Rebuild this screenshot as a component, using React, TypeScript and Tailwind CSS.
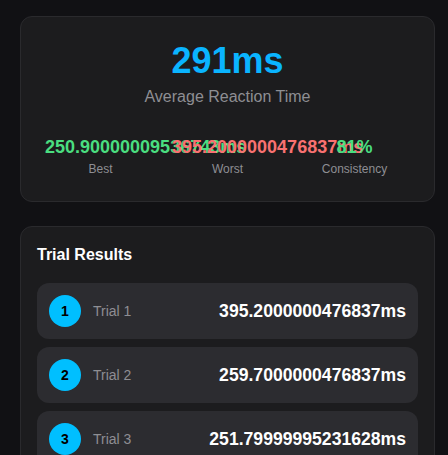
import React from 'react'

const trials = [
  { n: 1, time: 395.2000000476837 },
  { n: 2, time: 259.7000000476837 },
  { n: 3, time: 251.79999995231628 },
]

export default function App() {
  const best = 250.90000009536743
  const worst = 395.2000000476837

  return (
    <div
      className="min-h-screen bg-[#111114] pl-5 pr-[13px] pt-4 pb-6"
      style={{ fontFamily: '"Liberation Sans", Arial, sans-serif' }}
    >
      {/* Summary */}
      <div className="rounded-xl border border-[#2a2a2d] bg-[#1c1c1e] p-6 text-center">
        <div className="text-4xl font-bold leading-10 text-[#0ab4ff]">291ms</div>
        <div className="mt-1 text-base text-[#8e8e93]">Average Reaction Time</div>

        <div className="mt-6 grid grid-cols-3 gap-4">
          <div>
            <div className="text-lg leading-7 font-bold text-[#4ade80]">{best}ms</div>
            <div className="text-xs text-[#8e8e93]">Best</div>
          </div>
          <div>
            <div className="text-lg leading-7 font-bold text-[#f87171]">{worst}ms</div>
            <div className="text-xs text-[#8e8e93]">Worst</div>
          </div>
          <div>
            <div className="text-lg leading-7 font-bold text-[#4ade80]">81%</div>
            <div className="text-xs text-[#8e8e93]">Consistency</div>
          </div>
        </div>
      </div>

      {/* Trials */}
      <div className="mt-6 rounded-xl border border-[#2a2a2d] bg-[#1c1c1e] p-4">
        <h3 className="mb-4 text-base font-bold text-white">Trial Results</h3>
        <div className="flex flex-col gap-2">
          {trials.map((t) => (
            <div
              key={t.n}
              className="flex h-14 items-center rounded-xl bg-[#2c2c30] px-3"
            >
              <div className="flex h-8 w-8 items-center justify-center rounded-full bg-[#00bfff] text-sm font-bold text-black">
                {t.n}
              </div>
              <span className="ml-3 text-sm text-[#8e8e93]">Trial {t.n}</span>
              <span className="ml-auto text-[17.6px] font-bold text-white">{t.time}ms</span>
            </div>
          ))}
        </div>
      </div>
    </div>
  )
}
